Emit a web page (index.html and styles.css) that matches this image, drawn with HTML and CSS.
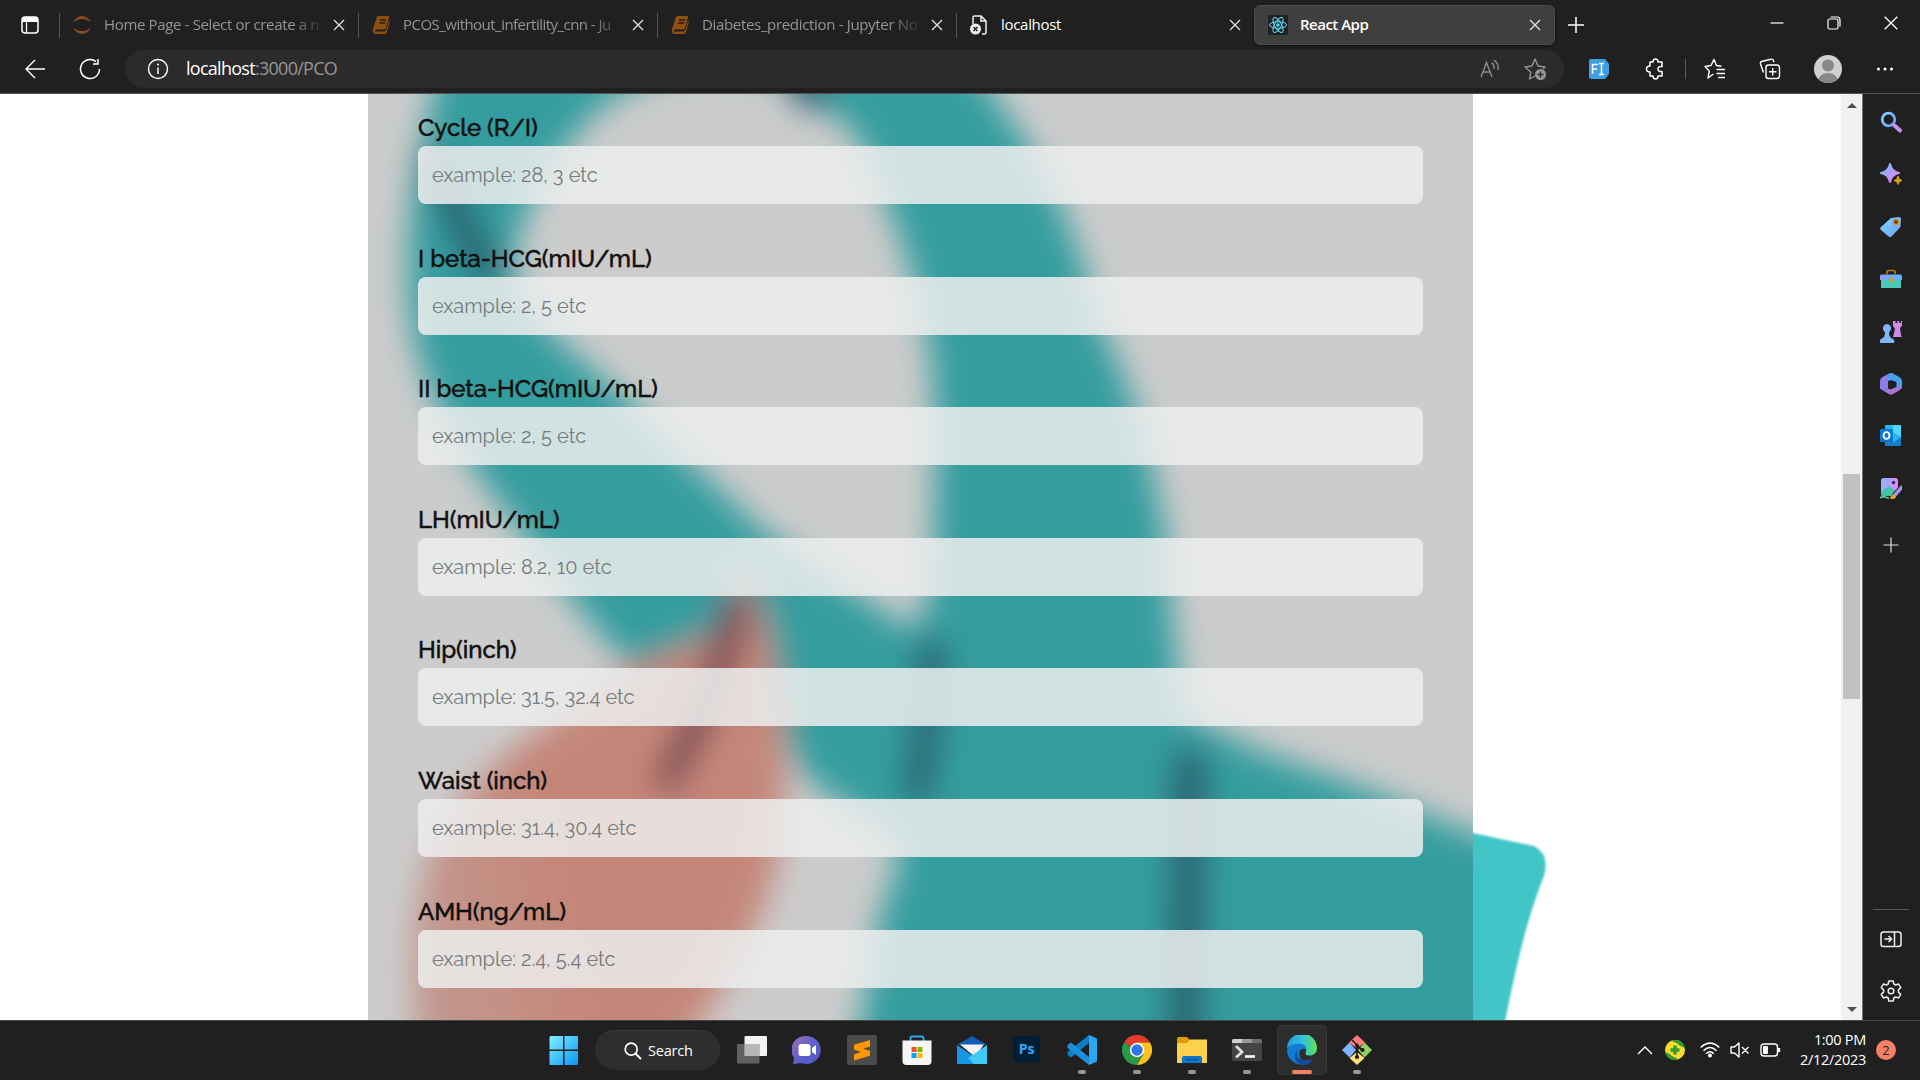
FILE: index.html
```html
<!DOCTYPE html>
<html lang="en">
<head>
<meta charset="utf-8">
<title>React App</title>
<link rel="stylesheet" href="styles.css">
</head>
<body>
<svg class="defs" aria-hidden="true">
  <defs>
    <linearGradient id="blueviolet" x1="0" y1="0" x2="1" y2="1"><stop offset=".1" stop-color="#6fd0ff"/><stop offset=".4" stop-color="#a3a0fb"/><stop offset=".8" stop-color="#d88bf0"/></linearGradient>
    <linearGradient id="violet" x1="0" y1="0" x2="1" y2="0"><stop offset="0" stop-color="#8ab4ff"/><stop offset="1" stop-color="#d98af5"/></linearGradient>
    <linearGradient id="sky" x1="0" y1="0" x2="1" y2="1"><stop offset="0" stop-color="#7fd8ff"/><stop offset="1" stop-color="#6d9cf5"/></linearGradient>
    <linearGradient id="lid" x1="0" y1="0" x2="1" y2="0"><stop offset="0" stop-color="#8f9cf8"/><stop offset="1" stop-color="#5cb6f7"/></linearGradient>
    <linearGradient id="win" x1="0" y1="0" x2="1" y2="1"><stop offset="0" stop-color="#7df3ff"/><stop offset="1" stop-color="#0a95f5"/></linearGradient>
    <linearGradient id="edgetop" x1="0" y1="0" x2="1" y2="0"><stop offset="0" stop-color="#1b9de2"/><stop offset=".55" stop-color="#35c4d8"/><stop offset="1" stop-color="#62e04e"/></linearGradient>
    <linearGradient id="chatg" x1="0" y1="0" x2="1" y2="1"><stop offset="0" stop-color="#a06fb4"/><stop offset=".5" stop-color="#5f62cf"/><stop offset="1" stop-color="#4c55c0"/></linearGradient>
    <symbol id="x" viewBox="0 0 12 12"><path d="M1 1l10 10M11 1L1 11" fill="none" stroke="currentColor" stroke-width="1.4"/></symbol>
    <symbol id="book" viewBox="0 0 18 20"><path d="M6.500 1H16q1.500 0 1 1.500L14 13q-.4 1.500-2 1.500H4q-1.500.5-.8 2h9q1.500 0 2-1.500l3-9.500q.8.500.5 1.500L15 17q-.6 2-2.500 2H4Q.5 19 .7 15L4.500 3q.5-2 2-2z" fill="#8e4f12"/><path d="M8 5h6M7.200 8h6" stroke="#2a1c10" stroke-width="1.300"/></symbol>
  </defs>
</svg>

<header class="browser">
  <div class="tabs">
    <div class="tab-menu"><svg width="20" height="20" viewBox="0 0 20 20"><rect x="2" y="2" width="16" height="16" rx="3" fill="none" stroke="#fff" stroke-width="1.5"/><path d="M2 7V4q0-2 2-2h12q2 0 2 2v3z" fill="#fff"/><path d="M6.500 7v11" stroke="#fff" stroke-width="1.3"/></svg></div>
    <div class="tab">
      <svg class="fav" width="20" height="20" viewBox="0 0 20 20"><path d="M1 7.500Q4 1 10 1t9 6.500Q15 4 10 4T1 7.500M1 12.500Q4 19 10 19t9-6.500Q15 16 10 16t-9-3.500" fill="#8a4a22"/></svg>
      <span class="title t1">Home Page - Select or create a n</span><svg class="close"><use href="#x"/></svg>
    </div>
    <div class="tab">
      <svg class="fav"><use href="#book"/></svg>
      <span class="title t2">PCOS_without_infertility_cnn - Ju</span><svg class="close"><use href="#x"/></svg>
    </div>
    <div class="tab">
      <svg class="fav"><use href="#book"/></svg>
      <span class="title t3">Diabetes_prediction - Jupyter No</span><svg class="close"><use href="#x"/></svg>
    </div>
    <div class="tab">
      <svg class="fav" width="20" height="20" viewBox="0 0 20 20"><path d="M4 9V2.500Q4 1 5.500 1H12l5 5v11.500q0 1.500-1.500 1.500H13M12 1v5h5" fill="none" stroke="#eee" stroke-width="1.500"/><circle cx="6.500" cy="14" r="5.500" fill="#eee"/><path d="M4.500 12l4 4m0-4l-4 4" stroke="#222" stroke-width="1.600"/></svg>
      <span class="title lit">localhost</span><svg class="close"><use href="#x"/></svg>
    </div>
    <div class="tab active">
      <svg class="fav" width="20" height="20" viewBox="0 0 20 20"><rect width="20" height="20" rx="2" fill="#202124"/><g fill="none" stroke="#61dafb"><ellipse cx="10" cy="10" rx="8.500" ry="3.300"/><ellipse cx="10" cy="10" rx="8.500" ry="3.300" transform="rotate(60 10 10)"/><ellipse cx="10" cy="10" rx="8.500" ry="3.300" transform="rotate(120 10 10)"/></g><circle cx="10" cy="10" r="1.700" fill="#61dafb"/></svg>
      <span class="title lit bold">React App</span><svg class="close"><use href="#x"/></svg>
    </div>
    <svg class="newtab" width="18" height="18" viewBox="0 0 18 18"><path d="M9 1v16M1 9h16" stroke="#fff" stroke-width="1.500"/></svg>
    <div class="winbtns">
      <svg width="14" height="14" viewBox="0 0 14 14"><path d="M.5 7h13" stroke="#fff" stroke-width="1.200"/></svg>
      <svg width="14" height="14" viewBox="0 0 14 14"><g fill="none" stroke="#fff" stroke-width="1.200"><rect x="1" y="3" width="10" height="10" rx="1.500"/><path d="M3.500 1H10q3 0 3 3v6.500"/></g></svg>
      <svg width="14" height="14" viewBox="0 0 14 14"><path d="M.7.700l12.600 12.600M13.300.700L.7 13.300" stroke="#fff" stroke-width="1.300"/></svg>
    </div>
  </div>
  <div class="toolbar">
    <svg class="nav" width="22" height="22" viewBox="0 0 22 22"><path d="M11 2L2 11l9 9M2 11h19" fill="none" stroke="#fff" stroke-width="1.400"/></svg>
    <svg class="nav" width="22" height="22" viewBox="0 0 22 22"><path d="M20.500 11A9.500 9.500 0 1 1 17 3.700M19 1v5h-5" fill="none" stroke="#fff" stroke-width="1.500"/></svg>
    <div class="address">
      <svg width="22" height="22" viewBox="0 0 22 22"><circle cx="11" cy="11" r="9.500" fill="none" stroke="#fff" stroke-width="1.400"/><path d="M11 9.500v6.500" stroke="#fff" stroke-width="1.500"/><circle cx="11" cy="6.500" r="1.100" fill="#fff"/></svg>
      <span class="url"><b>localhost</b>:3000/PCO</span>
      <svg class="read" width="20" height="20" viewBox="0 0 20 20"><path d="M1 18L6.500 3.500 12 18M3 13h7M11.500 4q3 1.500 2.500 6M14 1.200q5 3.300 4 9.800" fill="none" stroke="#8d8d8d" stroke-width="1.400"/></svg>
      <svg width="24" height="24" viewBox="0 0 24 24"><path d="M12 19l-5.500 3 1.300-7L2 10l7-1 3-7 3 7 7 1-2 2" fill="none" stroke="#969696" stroke-width="1.400" stroke-linejoin="round"/><circle cx="17.500" cy="17.500" r="5.500" fill="#969696"/><path d="M17.500 14.500v6M14.500 17.500h6" stroke="#2b2b2b" stroke-width="1.400"/></svg>
    </div>
    <div class="actions">
      <svg class="a-fi" width="20" height="20" viewBox="0 0 20 20"><path d="M2 0h14l4 5v10l-4 5H2q-2 0-2-2V2q0-2 2-2z" fill="#3f9fe0"/><path d="M3.500 15V5.500H9M3.500 10H8M10 4.500h2.500m0 0H15m-2.500 0v11M10 15.500h5" fill="none" stroke="#fff" stroke-width="1.500"/></svg>
      <svg class="a-ext" width="20" height="22" viewBox="0 0 20 22"><path d="M5 4h3q0-3 2.500-3T13 4h4v4.500q-4-.5-4 2.500t4 2.500V18h-4q0 3-2.500 3T8 18H5v-4q-3.500 0-3.500-3T5 8z" fill="none" stroke="#fff" stroke-width="1.500" stroke-linejoin="round"/></svg>
      <i class="bar"></i>
      <svg class="a-star" width="22" height="22" viewBox="0 0 22 22"><path d="M9.500 16L4 20l1.300-7L1 8.500l6-1L10 1.500l2.500 6 5 .8M12.500 11.500H21M12.500 15.500H21M14 19.500h7" fill="none" stroke="#fff" stroke-width="1.400" stroke-linejoin="round"/></svg>
      <svg class="a-col" width="22" height="22" viewBox="0 0 22 22"><g fill="none" stroke="#fff" stroke-width="1.400"><rect x="7" y="7" width="13.500" height="13.500" rx="2.500"/><path d="M4.500 14.500L1.500 6q-.5-2 1-2.500L12 1.200q2-.5 2.500 1.500l.5 1.500M13.700 10v7.500M10 13.800h7.500"/></g></svg>
      <svg class="a-me" width="28" height="28" viewBox="0 0 28 28"><clipPath id="me"><circle cx="14" cy="14" r="14"/></clipPath><g clip-path="url(#me)"><path d="M0 0h28v28H0z" fill="#d2d0ce"/><circle cx="14" cy="10.500" r="6" fill="#8a8886"/><ellipse cx="14" cy="25" rx="9.500" ry="7" fill="#8a8886"/></g></svg>
      <svg class="a-more" width="18" height="6" viewBox="0 0 18 6"><circle cx="2.500" cy="3" r="1.500" fill="#fff"/><circle cx="9" cy="3" r="1.500" fill="#fff"/><circle cx="15.500" cy="3" r="1.500" fill="#fff"/></svg>
    </div>
  </div>
</header>

<div class="middle">
  <main class="page">
    <svg class="art" viewBox="0 94 1841 926">
      <defs>
        <linearGradient id="rose" gradientUnits="userSpaceOnUse" x1="425" y1="900" x2="560" y2="870"><stop offset="0" stop-color="#f3bcb0"/><stop offset="1" stop-color="#f6a898"/></linearGradient>
        <filter id="soft" filterUnits="userSpaceOnUse" x="300" y="0" width="1300" height="1120"><feGaussianBlur stdDeviation="16"/></filter>
        <filter id="slight" filterUnits="userSpaceOnUse" x="300" y="0" width="1300" height="1120"><feGaussianBlur stdDeviation="1.2"/></filter>
        <clipPath id="inside"><path d="M368 94h1105v926H368z"/></clipPath>
        <g id="ribbon">
          <path fill="#42c5c7" fill-rule="evenodd" d="M460 0C420 130 405 210 408 290C412 360 430 400 478 474C520 530 570 600 625 662L700 700L783 722L796 768L838 802L892 835Q904 848 897 866L880 915L850 1080H1494C1509 1000 1522 930 1544 876Q1550 854 1534 846L1473 833L1356 785L1262 752L1189 716C1178 690 1174 640 1166 540C1150 440 1128 375 1099 325C1078 230 1040 130 910 0Z
            M720 64C790 68 840 115 864 147C893 215 925 300 932 370C936 460 938 560 922 620Q908 634 885 612C850 588 805 562 760 528C735 502 680 455 637 410C600 370 522 320 512 275C515 220 545 170 590 118C625 85 670 66 720 64Z"/>
          <path fill="url(#rose)" d="M742 560C748 590 766 610 770 640C779 690 787 760 784 800C783 880 755 950 660 1080H422C404 960 410 850 470 792C510 740 590 700 640 664L708 636C725 615 738 590 742 560Z"/>
          <g fill="none" stroke-linecap="round">
            <path stroke="#35778a" stroke-width="32" d="M440 165Q454 215 488 270"/>
            <path stroke="#35778a" stroke-width="36" d="M790 40L812 92"/>
            <path stroke="#35778a" stroke-width="30" d="M932 652Q930 720 917 790"/>
            <path stroke="#35778a" stroke-width="36" d="M1190 765L1184 1080"/>
            <path stroke="#8e5263" stroke-width="27" d="M736 606Q720 690 668 778"/>
          </g>
        </g>
      </defs>
      <use href="#ribbon" filter="url(#slight)"/>
      <g clip-path="url(#inside)"><path fill="#fff" d="M368 94h1105v926H368z"/><use href="#ribbon" filter="url(#soft)"/></g>
    </svg>
    <form class="panel">
      <label class="field"><span>Cycle (R/I)</span><input placeholder="example: 28, 3 etc"></label>
      <label class="field"><span>I beta-HCG(mIU/mL)</span><input placeholder="example: 2, 5 etc"></label>
      <label class="field"><span>II beta-HCG(mIU/mL)</span><input placeholder="example: 2, 5 etc"></label>
      <label class="field"><span>LH(mIU/mL)</span><input placeholder="example: 8.2, 10 etc"></label>
      <label class="field"><span>Hip(inch)</span><input placeholder="example: 31.5, 32.4 etc"></label>
      <label class="field"><span>Waist (inch)</span><input placeholder="example: 31.4, 30.4 etc"></label>
      <label class="field"><span>AMH(ng/mL)</span><input placeholder="example: 2.4, 5.4 etc"></label>
    </form>
  </main>
  <div class="scroll"><i class="up"></i><i class="thumb"></i><i class="down"></i></div>
  <aside class="side">
    <svg viewBox="0 0 22 22"><circle cx="8.500" cy="8.500" r="6.300" fill="none" stroke="url(#sky)" stroke-width="2.800"/><path d="M14.500 14.500l5.500 5" stroke="#c493f5" stroke-width="4" stroke-linecap="round"/></svg>
    <svg viewBox="0 0 22 22"><path d="M10 1q1.500 7.500 9 9-7.500 1.500-9 9Q8.500 11.500 1 10q7.500-1.500 9-9z" fill="url(#blueviolet)" stroke="url(#blueviolet)" stroke-width="2" stroke-linejoin="round"/><path d="M18 13q.7 4 4 4.500-3.500.5-4 4-.5-3.500-4-4 3.500-.5 4-4.500z" fill="#d9a219" stroke="#d9a219"/></svg>
    <svg viewBox="0 0 22 22"><path d="M11 2l8-1q2 0 2 2l-.5 8-9 9.500q-1.500 1-3 0L1 14q-1.500-1.500 0-3z" fill="url(#sky)"/><circle cx="16" cy="6" r="2.400" fill="#5a3100" stroke="#d98b0b" stroke-width="1.400"/></svg>
    <svg viewBox="0 0 22 22"><path d="M7 6V4q0-1.500 1.500-1.500h5Q15 2.500 15 4v2" fill="none" stroke="#b77a0c" stroke-width="1.700"/><path d="M1 10h20v9q0 1-1 1H2q-1 0-1-1z" fill="#4fc9b7"/><path d="M0 8q0-1.500 1.500-1.500h19Q22 6.500 22 8v4H0z" fill="url(#lid)"/><rect x="9" y="10" width="4" height="4" rx="1.200" fill="#d99a1f"/></svg>
    <svg viewBox="0 0 22 22"><path d="M13 0h2.500v2h1.700V0h2v2H21V0h1v5l-2 2 1 7 1 2h-9l2-8-2-3z" fill="#cf8ae9"/><path d="M7 3a4.200 4.200 0 0 1 3 7l-1 1.500q0 5 4 6.500 2 1 1 4H0q-1-3 1-4 4-1.500 4-6.500L4 10a4.200 4.200 0 0 1 3-7z" fill="#82b4fa"/></svg>
    <svg viewBox="0 0 22 22"><path d="M9 .5L2.500 4Q0 5.500 0 8v7.500l3.500 2.500L8 15.500V8l6-4z" fill="#8d7de8"/><path d="M9 .5q3-1 5 .5l6 3.500q2 1 2 3.500v7l-5.500 2.500V9L11 7 7 8.500z" fill="#479fee"/><path d="M3.500 18l5.500 3q2 1.200 4 0l7-4q2-1.300 2-4l-5.500 1-6 2.500L8 15.500z" fill="#a877d8"/></svg>
    <svg viewBox="0 0 22 22"><path d="M6 0h14q1 0 1 1v19q0 1-1 1H5V1q0-1 1-1z" fill="#27b4ef"/><path d="M13 0h7q1 0 1 1v11l-8-5z" fill="#56d6ff"/><path d="M5 13l9 4 7-5v9H5z" fill="#1581cf"/><rect y="4" width="13" height="13" rx="1.200" fill="#0878d4"/><ellipse cx="6.500" cy="10.500" rx="3" ry="3.400" fill="none" stroke="#fff" stroke-width="1.900"/></svg>
    <svg viewBox="0 0 22 22"><rect x="1" width="17" height="18" rx="2.500" fill="url(#violet)"/><path d="M1 14l8-6 9 7v3H3q-2 0-2-2z" fill="#3fc4a4"/><circle cx="13.500" cy="4.500" r="1.700" fill="#37215a"/><path d="M22 9L14.500 17.500" stroke="#202020" stroke-width="5.500" stroke-linecap="round"/><path d="M22 9L14.500 17.500" stroke="#a392f5" stroke-width="3.500" stroke-linecap="round"/><path d="M10 20.500q1-4.500 4-4t1.500 3.500q-2 2-5.500.5z" fill="#e0a028"/><path d="M0 20q3-2 5-1t4 1" fill="none" stroke="#5ac9a8" stroke-width="1.600"/></svg>
    <svg class="add" viewBox="0 0 22 22"><path d="M11 3.500v15M3.500 11h15" stroke="#ddd" stroke-width="1.200"/></svg>
    <i class="rule"></i>
    <svg viewBox="0 0 22 22"><g fill="none" stroke="#eee" stroke-width="1.500"><rect x="1" y="4" width="20" height="14.500" rx="2.500"/><path d="M14.500 4v14.500M4.500 11h7M8.500 8l3 3-3 3"/></g></svg>
    <svg viewBox="0 0 22 22"><g fill="none" stroke="#eee" stroke-width="1.500"><path stroke-linejoin="round" d="M8.800 1h4.400l.6 3 1.800 1 3-1 2.100 3.700-2.300 2.200v2.200l2.300 2.200-2.100 3.700-3-1-1.800 1-.6 3H8.800l-.6-3-1.800-1-3 1-2.100-3.700 2.300-2.200V9.900L1.300 7.700 3.400 4l3 1 1.800-1z"/><circle cx="11" cy="11" r="2.800"/></g></svg>
  </aside>
</div>

<footer class="taskbar">
  <svg class="start" width="30" height="30" viewBox="0 0 30 30"><path fill="url(#win)" d="M1.500 1H14v13.500H.5V2zM15.500 1H28q1 0 1 1v12.500H15.500zM.5 16H14v14H1.500q-1 0-1-1zM15.500 16H29v13q0 1-1 1H15.500z"/></svg>
  <div class="search"><svg width="18" height="18" viewBox="0 0 18 18"><circle cx="7.200" cy="7.200" r="6" fill="none" stroke="#fff" stroke-width="1.700"/><path d="M11.500 11.500l5.500 5.500" stroke="#fff" stroke-width="2"/></svg><span>Search</span></div>
  <div class="app"><svg viewBox="0 0 30 30"><rect x="7.500" y="1" width="22.500" height="20" rx="1" fill="#f2f2f2"/><rect y="9" width="22.500" height="19.500" rx="1" fill="#777" fill-opacity=".75"/><path d="M7.500 9h15v12h-15z" fill="#b6b6b6"/></svg></div>
  <div class="app"><svg viewBox="0 0 30 30"><path d="M15 1a14 14 0 1 1-5.500 27L1 29l1-6A14 14 0 0 1 15 1z" fill="url(#chatg)"/><rect x="6.500" y="9" width="12" height="12" rx="2.500" fill="#fff"/><path d="M20 13l4-3v10l-4-3z" fill="#fff"/></svg></div>
  <div class="app"><svg viewBox="0 0 30 30"><rect width="30" height="30" rx="2" fill="#4b4b4b"/><path d="M23 5v6.500l-7 2.300 7 2v5L7 25.500v-6l7-2.700-7-2v-5z" fill="#ff9800"/></svg></div>
  <div class="app"><svg viewBox="0 0 30 30"><path d="M8.500 7V3q0-1.500 1.500-1.500h10q1.500 0 1.500 1.500v4" fill="none" stroke="#28a8ea" stroke-width="2"/><path d="M.5 5.500h29V26q0 4-4 4h-21q-4 0-4-4z" fill="#f5f5f5"/><path d="M9.500 12h5v5h-5z" fill="#f25022"/><path d="M15.500 12h5v5h-5z" fill="#7fba00"/><path d="M9.500 18h5v5h-5z" fill="#00a4ef"/><path d="M15.500 18h5v5h-5z" fill="#ffb900"/></svg></div>
  <div class="app"><svg viewBox="0 0 30 30"><path d="M0 10L15 1l15 9z" fill="#0f5fb5"/><path d="M3 9.500h24L18 22z" fill="#f4f4f4"/><path d="M0 10l19 13 11 6H0z" fill="#1597e5"/><path d="M30 10v19H17L11 23z" fill="#3fc9f5"/></svg></div>
  <div class="app"><svg viewBox="0 0 30 30"><rect x="1" y="1" width="27" height="26" rx="4" fill="#001e36"/><text x="14.500" y="18.500" class="ps">Ps</text></svg></div>
  <div class="app run"><svg viewBox="0 0 30 30"><path d="M22 0v8L4 22.500.5 20v-3z" fill="#0c7fc7"/><path d="M.5 10L4 7.500 22 22v8L.5 13z" fill="#1b8fdc"/><path d="M22 0l8 3.500v23L22 30z" fill="#2ba6f2"/></svg></div>
  <div class="app run"><svg viewBox="0 0 30 30"><path d="M15 15L2 7.500A15 15 0 0 1 28 7.500H15z" fill="#e33b2e"/><path d="M2 7.500A15 15 0 0 0 15 30l6.500-11.500L15 15z" fill="#2b9a47"/><path d="M28 7.500A15 15 0 0 1 15 30l6.500-11L15 7.500z" fill="#fcc31e"/><circle cx="15" cy="15" r="7.200" fill="#fff"/><circle cx="15" cy="15" r="5.700" fill="#2f77ea"/></svg></div>
  <div class="app run"><svg viewBox="0 0 30 30"><path d="M0 3.500Q0 2 1.500 2H10l3 3v5H0z" fill="#dd9b06"/><path d="M0 8h10l3-3.500h17V28H0z" fill="#ffd04c"/><path d="M5 28v-5q0-2 2-2h16q2 0 2 2v5z" fill="#1174c7"/><path d="M9 24.500h12" stroke="#0c4f8e" stroke-width="1.200"/></svg></div>
  <div class="app run"><svg viewBox="0 0 30 30"><rect y="4" width="30" height="22" rx="1.500" fill="#444"/><path d="M0 8V5.500Q0 4 1.500 4H10v4z" fill="#d0d0d0"/><path d="M10 4h10v4H10z" fill="#9a9a9a"/><path d="M20 4h8.500Q30 4 30 5.500V8H20z" fill="#6f6f6f"/><path d="M4 11l6 6-6 5.500" fill="none" stroke="#ddd" stroke-width="2.800"/><path d="M13 21.500h10" stroke="#fff" stroke-width="2.600"/></svg></div>
  <div class="app run current"><svg viewBox="0 0 30 30"><path d="M0 14A15 15 0 0 1 30 13q0 6-6 7.500-6 .5-5.500-2.500Q21 10 13 9 4 9 0 14z" fill="url(#edgetop)"/><path d="M0 15Q3 8.500 12 8.500q7 .5 7.500 6.500-4-3-7 1-2 7 5 11-2 3-5 2.500A15 15 0 0 1 0 15z" fill="#0f7fd6"/><path d="M11 14q-5 13 14 11 2-.5 2-1A15 15 0 0 1 14 30Q3 24 11 14z" fill="#124e9e"/></svg></div>
  <div class="app run"><svg viewBox="0 0 30 30"><path d="M15 0l8 7.500-8 6-8-6z" fill="#ff7b7b"/><path d="M7.500 7.500l6.500 7.500-6.500 7.500L0 15z" fill="#80b3ff"/><path d="M22.500 7.500L30 15l-7.500 7.500L16 15z" fill="#8fd165"/><path d="M15 17l7.500 6L15 30l-7.500-7z" fill="#ffe075"/><path d="M10 5l5 5v12M15 11l6 4.500" stroke="#201818" stroke-width="1.600" fill="none"/><circle cx="15" cy="10.500" r="1.900" fill="#201818"/><circle cx="15" cy="22" r="2.100" fill="#201818"/><circle cx="20.500" cy="15" r="2.100" fill="#201818"/></svg></div>
  <div class="tray">
    <svg class="s-up" width="16" height="10" viewBox="0 0 16 10"><path d="M1 9l7-7 7 7" fill="none" stroke="#fff" stroke-width="1.400"/></svg>
    <svg class="s-av" width="20" height="20" viewBox="0 0 20 20"><circle cx="10" cy="10" r="10" fill="#fcdc28"/><path d="M8 1q8-2 11 6l-4-2q-2-3-7-4zM12 19Q4 20 1 13l3 1.500q3 3 8 4.500z" fill="#2e9b35" stroke="#2e9b35" stroke-width="1.500"/><path d="M10 5.500v9M5.500 10h9" stroke="#2e9b35" stroke-width="3.400"/></svg>
    <svg class="s-wifi" width="20" height="16" viewBox="0 0 20 16"><g fill="none" stroke="#fff" stroke-width="1.500"><path d="M.7 5.500q9.300-8.800 18.600 0M3.500 8.700q6.500-6.500 13 0M6.300 11.600q3.700-3.700 7.400 0"/></g><circle cx="10" cy="13.500" r="2" fill="#fff"/></svg>
    <svg class="s-vol" width="20" height="16" viewBox="0 0 20 16"><path d="M1 5h3.500L9 1v14l-4.500-4H1zM12 5l6.500 6.500M18.500 5L12 11.500" fill="none" stroke="#fff" stroke-width="1.400" stroke-linejoin="round"/></svg>
    <svg class="s-bat" width="21" height="14" viewBox="0 0 21 14"><rect x="1" y="1" width="16.500" height="12" rx="3" fill="none" stroke="#fff" stroke-width="1.400"/><rect x="3" y="3" width="5" height="8" rx="1" fill="#fff"/><path d="M19 5v4" stroke="#fff" stroke-width="2.400"/></svg>
    <div class="clock"><div class="time">1:00 PM</div><div class="date">2/12/2023</div></div>
    <span class="count">2</span>
  </div>
</footer>
</body>
</html>
```
FILE: styles.css
```css
* { box-sizing: border-box; }
body {
  margin: 0; width: 1920px; height: 1080px; overflow: hidden;
  display: flex; flex-direction: column; background: #202020;
  font-family: "Open Sans", "Noto Sans", sans-serif; color: #fff;
}
svg { display: block; flex: none; }
.defs { position: absolute; width: 0; height: 0; }

.browser { height: 94px; flex: none; background: #202020; border-bottom: 1px solid #555; }
.tabs { height: 50px; display: flex; align-items: center; padding-left: 59px; }
.tab-menu { width: 59px; margin-left: -59px; padding-left: 20px; }
.tab {
  width: 299px; height: 25px; border-left: 1px solid #555; display: flex; align-items: center;
  padding: 0 13px 0 12px; font-size: 15px; color: #959595;
}
.tab:nth-child(5) { width: 298px; }
.fav { width: 20px; height: 20px; margin-right: 12px; }
.title {
  flex: 1; white-space: nowrap; line-height: 22px; padding-bottom: 2px;
  mask-image: linear-gradient(90deg, #000 188px, transparent 222px);
}
.t1 { letter-spacing: -.35px; }
.t2 { letter-spacing: -.53px; }
.t3 { letter-spacing: -.33px; }
.lit { color: #fff; mask-image: none; letter-spacing: -.3px; }
.bold { font-weight: 600; letter-spacing: -.5px; }
.close { width: 12px; height: 12px; margin-left: 12px; color: #e0e0e0; }
.tab.active {
  width: 301px; height: 40px; background: #3f3f3f; border: 1px solid #4c4c4c; border-radius: 6px;
  padding: 0 13px; box-shadow: 0 1px 3px #111;
}
.newtab { margin-left: 12px; }
.winbtns { margin-left: auto; display: flex; gap: 43px; padding: 0 22px 4px 0; }

.toolbar { height: 38px; display: flex; align-items: center; padding-left: 24px; }
.nav { margin-right: 33px; }
.nav + .nav { margin-right: 24px; }
.address {
  width: 1439px; height: 38px; border-radius: 19px; background: #2b2b2b;
  display: flex; align-items: center; padding: 0 17px 0 22px;
}
.url { flex: 1; margin-left: 17px; padding-bottom: 2px; font-size: 18px; letter-spacing: -.72px; color: #979797; }
.url b { font-weight: 400; color: #fff; }
.read { margin-right: 23px; }
.actions { flex: 1; display: flex; align-items: center; padding-left: 25px; }
.a-fi { margin-right: 36px; }
.a-ext { margin-right: 20px; }
.bar { width: 1px; height: 20px; background: #5a5a5a; margin-right: 18px; }
.a-star { margin-right: 33px; }
.a-col { margin-right: 33px; }
.a-me { margin-right: 34px; }

.middle { height: 926px; flex: none; display: flex; }
.page { width: 1841px; background: #fff; position: relative; overflow: hidden; }
.art { position: absolute; inset: 0; width: 1841px; height: 926px; }
.panel {
  position: relative; width: 1105px; height: 926px; margin-left: 368px; padding: 19px 50px 0;
  background: rgba(0, 0, 0, .2);
  display: grid; grid-template-rows: repeat(7, 130.6px);
  font-family: Raleway, Lato, sans-serif;
}
.field { display: flex; flex-direction: column; }
.field span { height: 33px; line-height: 29px; font-size: 24px; font-weight: 500; letter-spacing: -.05px; color: #111; -webkit-text-stroke: .5px #111; white-space: nowrap; }
.field input {
  width: 1005px; height: 58px; border: 0; border-radius: 8px; padding: 0 14px;
  background: rgba(236, 238, 237, .855); font: 20px Raleway, Lato, sans-serif; outline: 0;
}
.field input::placeholder { color: #757b7b; opacity: 1; }

.scroll { width: 22px; background: #f1f1f1; border-right: 1px solid #777; display: flex; flex-direction: column; align-items: center; }
.up { margin-top: 9px; border: 5px solid transparent; border-top: 0; border-bottom-color: #505050; }
.thumb { margin-top: 366px; width: 17px; height: 225px; background: #c1c1c1; }
.down { margin-top: 308px; border: 5px solid transparent; border-bottom: 0; border-top-color: #505050; }

.side { width: 57px; background: #202020; display: flex; flex-direction: column; align-items: center; gap: 30.4px; padding: 17px 2px 0 0; }
.side svg { width: 22px; height: 22px; }
.side .add { margin-top: 4px; }
.rule { width: 36px; height: 1px; background: #5a5a5a; margin-top: 322px; margin-bottom: -12px; }

.taskbar { height: 60px; flex: none; background: #202020; border-top: 1px solid #454545; display: flex; align-items: center; padding: 0 0 1px 549px; }
.start { margin: 0 16px 0 0; }
.search {
  width: 125px; height: 40px; border-radius: 20px; background: #2e2e2e; border-top: 1px solid #3a3a3a; margin-right: 7px;
  display: flex; align-items: center; padding-left: 29px; gap: 6px; font-size: 14.500px; letter-spacing: -.2px;
}
.search span { padding-bottom: 1px; }
.app { width: 50px; height: 50px; margin-right: 5px; border-radius: 5px; display: flex; flex-direction: column; align-items: center; padding-top: 9px; border: 1px solid transparent; }
.app svg { width: 30px; height: 30px; }
.ps { font: 700 14px "Open Sans", sans-serif; fill: #31a8ff; text-anchor: middle; }
.run::after { content: ""; width: 8px; height: 4px; border-radius: 2px; background: #999; margin-top: 5px; }
.current { background: #2d2d2d; border-color: #383838; }
.current::after { width: 20px; background: #fa7f66; }
.tray { margin-left: auto; display: flex; align-items: center; padding-right: 24px; }
.s-up { margin-right: 12px; }
.s-av { margin-right: 15px; }
.s-wifi { margin-right: 10px; }
.s-vol { margin-right: 10px; }
.clock { width: 85px; text-align: right; font-size: 14.500px; line-height: 20px; padding-bottom: 1px; white-space: nowrap; }
.time { letter-spacing: -.3px; }
.date { letter-spacing: -.3px; }
.count { width: 20px; height: 20px; border-radius: 10px; background: #fa7f66; color: #222; font-size: 13px; line-height: 20px; text-align: center; margin-left: 10px; }
```
